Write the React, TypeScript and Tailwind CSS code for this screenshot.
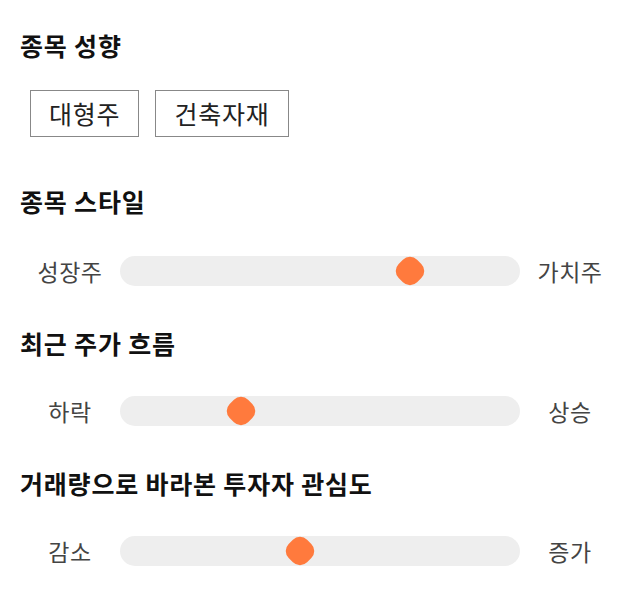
import React from 'react';

interface SliderRowProps {
  left: string;
  right: string;
  value: number; // thumb centre, percent of the track
}

function SliderRow({ left, right, value }: SliderRowProps) {
  return (
    <div className="flex items-center">
      <div className="w-[100px] text-center text-[23px] tracking-[0.5px] leading-[30px] text-[#444]">{left}</div>
      <div className="relative w-[400px] h-[30px] rounded-full bg-[#eeeeee]">
        <div
          className="absolute top-1/2 w-[26px] h-[26px] -translate-x-1/2 -translate-y-1/2 rotate-45 rounded-[10px] bg-[#ff7a3d]"
          style={{ left: `${value}%` }}
        />
      </div>
      <div className="w-[100px] text-center text-[23px] tracking-[0.5px] leading-[30px] text-[#444]">{right}</div>
    </div>
  );
}

function Title({ children }: { children: React.ReactNode }) {
  return (
    <h2 className="text-[25px] tracking-[0.8px] leading-[34px] font-bold text-[#111]">{children}</h2>
  );
}

export default function App() {
  return (
    <div
      className="w-[640px] h-[606px] bg-white px-[20px] pt-[28px]"
      style={{ fontFamily: '"Noto Sans CJK KR", "Noto Sans", sans-serif' }}
    >
      <Title>종목 성향</Title>
      <div className="flex gap-[16px] ml-[10px] mt-[28px]">
        {['대형주', '건축자재'].map((tag) => (
          <div
            key={tag}
            className="h-[47px] px-[18px] flex items-center border border-[#888] text-[25px] tracking-[0.8px] text-[#222]"
          >
            {tag}
          </div>
        ))}
      </div>

      <div className="mt-[47px]">
        <Title>종목 스타일</Title>
        <div className="mt-[38px]">
          <SliderRow left="성장주" right="가치주" value={72.4} />
        </div>
      </div>

      <div className="mt-[40px]">
        <Title>최근 주가 흐름</Title>
        <div className="mt-[36px]">
          <SliderRow left="하락" right="상승" value={30.25} />
        </div>
      </div>

      <div className="mt-[40px]">
        <Title>거래량으로 바라본 투자자 관심도</Title>
        <div className="mt-[36px]">
          <SliderRow left="감소" right="증가" value={45} />
        </div>
      </div>
    </div>
  );
}
